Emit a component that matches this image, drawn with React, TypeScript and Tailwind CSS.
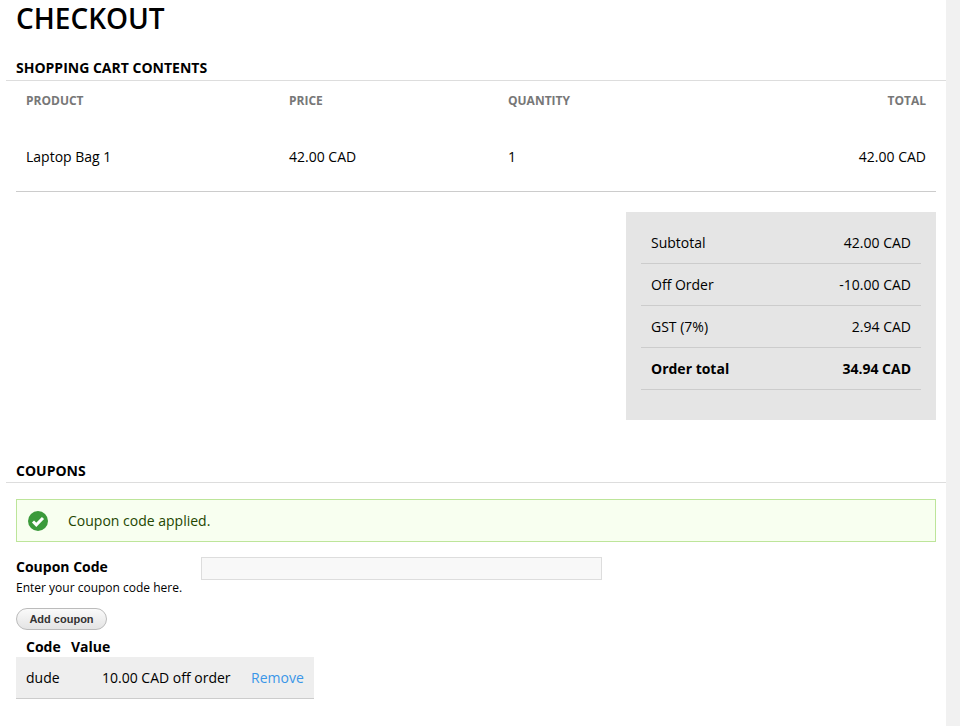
import React from 'react'

function App(): JSX.Element {
  const rows = [
    ['Subtotal', '42.00 CAD'],
    ['Off Order', '-10.00 CAD'],
    ['GST (7%)', '2.94 CAD'],
  ]
  return (
    <div className="flex h-[726px] overflow-hidden bg-white text-black" style={{ fontFamily: '"Open Sans", sans-serif' }}>
      <div className="w-[946px] pl-[6px]">
        <h1 className="pl-[10px] pt-[1px] text-[28px] font-semibold leading-[34px]">CHECKOUT</h1>

        <h2 className="mt-[23px] border-b border-[#ddd] pb-[3px] pl-[10px] text-[14px] font-bold leading-[19px]">SHOPPING CART CONTENTS</h2>
        <div className="ml-[10px] w-[920px] border-b border-[#ccc]">
          <div className="flex h-[40px] items-center text-[12px] font-bold text-[#777]">
            <div className="w-[273px] pl-[10px]">PRODUCT</div>
            <div className="w-[219px]">PRICE</div>
            <div className="flex-1">QUANTITY</div>
            <div className="pr-[10px]">TOTAL</div>
          </div>
          <div className="flex h-[70px] items-center text-[14px]">
            <div className="w-[273px] pl-[10px]">Laptop Bag 1</div>
            <div className="w-[219px]">42.00 CAD</div>
            <div className="flex-1">1</div>
            <div className="pr-[10px]">42.00 CAD</div>
          </div>
        </div>

        <div className="ml-[620px] mt-[20px] h-[208px] w-[310px] bg-[#e5e5e5] px-[15px] pt-[10px] text-[14px]">
          {rows.map(([a, b]) => (
            <div key={a} className="flex h-[42px] items-center justify-between border-b border-[#ccc] px-[10px]">
              <span>{a}</span>
              <span>{b}</span>
            </div>
          ))}
          <div className="flex h-[42px] items-center justify-between border-b border-[#ccc] px-[10px] font-bold">
            <span>Order total</span>
            <span>34.94 CAD</span>
          </div>
        </div>

        <h2 className="mt-[41px] border-b border-[#ddd] pb-[2px] pl-[10px] text-[14px] font-bold leading-[19px]">COUPONS</h2>
        <div className="ml-[10px] mt-[16px] flex h-[43px] w-[920px] items-center border border-[#bde59a] bg-[#f8fff0] pl-[10px] text-[14px] text-[#234600]">
          <svg width="22" height="22" viewBox="0 0 22 22">
            <circle cx="11" cy="11" r="10" fill="#3b9a3b" />
            <path d="M6 11.5l3.3 3.3L16 8" stroke="#fff" strokeWidth="3" fill="none" />
          </svg>
          <span className="ml-[19px]">Coupon code applied.</span>
        </div>

        <div className="ml-[10px] mt-[15px] flex items-start">
          <div className="w-[185px]">
            <div className="text-[14px] font-bold leading-[20px]">Coupon Code</div>
            <div className="mt-[3px] text-[12px] leading-[16px]">Enter your coupon code here.</div>
          </div>
          <input className="h-[23px] w-[401px] border border-[#ddd] bg-[#f8f8f8]" />
        </div>

        <button className="ml-[10px] mt-[12px] h-[22px] w-[91px] rounded-[11px] border border-[#bbb] bg-gradient-to-b from-[#fafafa] to-[#e4e4e4] text-[11px] font-bold text-[#333]" style={{ fontFamily: '"Liberation Sans", sans-serif' }}>Add coupon</button>

        <div className="ml-[10px] mt-[5px] w-[298px] text-[14px]">
          <div className="flex h-[22px] items-center font-bold">
            <div className="w-[55px] pl-[10px]">Code</div>
            <div>Value</div>
          </div>
          <div className="flex h-[42px] items-center border-b border-[#ccc] bg-[#eee]">
            <div className="w-[86px] pl-[10px]">dude</div>
            <div className="w-[149px]">10.00 CAD off order</div>
            <div className="text-[#3a96e8]">Remove</div>
          </div>
        </div>
      </div>
      <div className="w-[14px] bg-[#f1f1f1]" />
    </div>
  )
}

export default App
